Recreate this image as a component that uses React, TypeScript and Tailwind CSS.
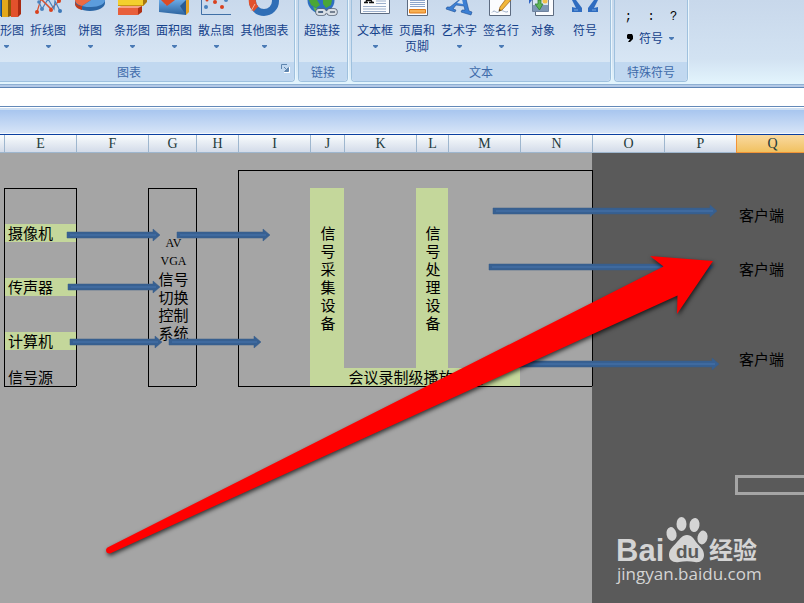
import type { ReactNode } from 'react';
import clsx from 'clsx';

interface RibbonButtonProps {
  label: string;
  icon: ReactNode;
  menu?: boolean;
  wide?: boolean;
}

interface Cell {
  text?: string;
  lines?: string[];
  rowSpan?: number;
  colSpan?: number;
  fill?: boolean;
  align?: 'left' | 'center' | 'stacked';
}

const COLUMNS = [
  { id: 'D', width: 'w-[4px]' },
  { id: 'E', width: 'w-[72px]' },
  { id: 'F', width: 'w-[72px]' },
  { id: 'G', width: 'w-[48px]' },
  { id: 'H', width: 'w-[42px]' },
  { id: 'I', width: 'w-[72px]' },
  { id: 'J', width: 'w-[34px]' },
  { id: 'K', width: 'w-[72px]' },
  { id: 'L', width: 'w-[32px]' },
  { id: 'M', width: 'w-[72px]' },
  { id: 'N', width: 'w-[72px]' },
  { id: 'O', width: 'w-[72px]' },
  { id: 'P', width: 'w-[72px]' },
  { id: 'Q', width: 'w-[72px]' },
];

const ROWS = Array.from({ length: 60 }, (_, i) => i + 1);

const CELLS: Record<string, Cell> = {
  E5: { text: '摄像机', fill: true },
  E8: { text: '传声器', fill: true },
  E11: { text: '计算机', fill: true },
  E13: { text: '信号源' },
  G3: { lines: ['AV', 'VGA', '信号', '切换', '控制', '系统'], rowSpan: 11, align: 'center' },
  J3: { text: '信号采集设备', rowSpan: 10, fill: true, align: 'stacked' },
  L3: { text: '信号处理设备', rowSpan: 10, fill: true, align: 'stacked' },
  J13: { text: '会议录制级播放系统', colSpan: 4, fill: true, align: 'center' },
  Q4: { text: '客户端' },
  Q7: { text: '客户端' },
  Q12: { text: '客户端' },
};

// Outlined ranges: first column, last column, first row, last row
const BOXES = [
  [1, 1, 3, 13],
  [3, 3, 3, 13],
  [5, 10, 2, 13],
];

const ARROWS = [
  { from: 67, to: 160, y: 235 },
  { from: 177, to: 270, y: 235 },
  { from: 68, to: 160, y: 287 },
  { from: 70, to: 162, y: 342 },
  { from: 169, to: 261, y: 342 },
  { from: 493, to: 717, y: 211 },
  { from: 489, to: 713, y: 267 },
  { from: 495, to: 719, y: 364 },
];

function isCovered(col: number, row: number) {
  return Object.entries(CELLS).some(([key, cell]) => {
    const c = COLUMNS.findIndex((column) => column.id === key[0]);
    const r = Number(key.slice(1));
    if (c === col && r === row) return false;
    return col >= c && col < c + (cell.colSpan ?? 1) && row >= r && row < r + (cell.rowSpan ?? 1);
  });
}

function outline(col: number, row: number) {
  const left = BOXES.some(([c1, c2, r1, r2]) => (col === c1 || col === c2 + 1) && row >= r1 && row <= r2);
  const top = BOXES.some(([c1, c2, r1, r2]) => (row === r1 || row === r2 + 1) && col >= c1 && col <= c2);
  return clsx(left && 'border-l border-l-black', top && 'border-t border-t-black');
}

function Caret() {
  return (
    <svg width="5" height="3" viewBox="0 0 5 3" aria-hidden="true">
      <path d="M0 0h5v1L3 3H2L0 1z" fill="#4a7ab5" />
    </svg>
  );
}

function RibbonButton({ label, icon, menu, wide }: RibbonButtonProps) {
  return (
    <button
      type="button"
      className={clsx(
        'flex shrink-0 flex-col items-center text-xs leading-4 text-[#15428b]',
        wide ? 'w-[55px]' : 'w-[42px]'
      )}
    >
      <span className="mb-0.5 block h-5">{icon}</span>
      <span className="whitespace-pre">{label}</span>
      {menu && (
        <span className="flex h-4 items-center">
          <Caret />
        </span>
      )}
    </button>
  );
}

interface RibbonGroupProps {
  title: string;
  className: string;
  launcher?: boolean;
  children: ReactNode;
}

function RibbonGroup({ title, className, launcher, children }: RibbonGroupProps) {
  return (
    <section
      aria-label={title}
      className={clsx(
        'flex h-[82px] shrink-0 flex-col rounded-b border border-t-0 border-[#9fc1de] bg-gradient-to-b from-[#c9d9ec] to-[#dceaf7] shadow-[1px_0_0_#eaf6fd]',
        className
      )}
    >
      <div className={clsx('flex h-[62px] px-0.5', launcher && 'justify-end')}>{children}</div>
      <div className="relative h-[19px] rounded-b bg-[#c1d8f0] text-center text-xs leading-[19px] text-[#3e6aaa]">
        {title}
        {launcher && (
          <button type="button" aria-label="图表选项" className="absolute top-0.5 right-1">
            <svg width="9" height="9" viewBox="0 0 9 9">
              <path d="M8 3v5H3" fill="none" stroke="#fff" strokeWidth="2" />
              <path d="M.5 5V.5H6" fill="none" stroke="#5f86b0" />
              <path d="M3 3l3 3M7.500 3.500v4h-4z" fill="#5f86b0" stroke="#5f86b0" />
            </svg>
          </button>
        )}
      </div>
    </section>
  );
}

function ColumnIcon() {
  return (
    <svg width="42" height="20" viewBox="0 0 42 20">
      <path d="M8 0h8v16H8z" fill="#2d6fb5" />
      <path d="M16 0h2v17h-2z" fill="#184a86" />
      <path d="M17 0h6v17h-6z" fill="#e3a81b" />
      <path d="M23 0h3v16l-3 1z" fill="#8a5a05" />
      <path d="M26 0h7v17h-7z" fill="#e2512c" />
      <path d="M33 0h3v14l-3 3z" fill="#a82a12" />
    </svg>
  );
}

function LineIcon() {
  return (
    <svg width="42" height="20" viewBox="0 0 42 20">
      <path d="M10 12l4-13 10 10 9-9" fill="none" stroke="#d9502f" strokeWidth="1.200" />
      <path d="M12 2l3 7 6-10 6 10 1-8 5 10" fill="none" stroke="#4a82bd" strokeWidth="1.200" />
      <path d="M14 -1l10 10" stroke="#d9502f" strokeWidth="1.200" />
      <circle cx="10" cy="12" r="2" fill="#d9411e" />
      <circle cx="24" cy="10" r="2" fill="#d9411e" />
      <circle cx="15" cy="9" r="2" fill="#4a82bd" />
      <circle cx="33" cy="11" r="2" fill="#3c78b8" />
      <circle cx="32" cy="1" r="2" fill="#d9411e" />
      <circle cx="12" cy="2" r="1.800" fill="#4a82bd" />
    </svg>
  );
}

function PieIcon() {
  return (
    <svg width="42" height="20" viewBox="0 0 42 20">
      <path d="M6 0v3c0 4 6 8 15 8s15-4 15-8V0z" fill="#2b66a5" />
      <path d="M13 6L22 0h14c0 4-6 7-14 7-3 0-6 0-9-1z" fill="#5c9ddc" />
      <path d="M6 0h16l-9 6c-4-1-7-3-7-6z" fill="#ec6a43" />
      <path d="M6 1c0 3 3 5 7 5v4C9 9 6 7 6 4z" fill="#c23c1c" />
    </svg>
  );
}

function BarIcon() {
  return (
    <svg width="42" height="20" viewBox="0 0 42 20">
      <path d="M7 0h25v6H7z" fill="#f3cf2e" />
      <path d="M32 6V0h4v2z" fill="#a9780d" />
      <path d="M7 5h25l3-2-3 3H7z" fill="#c79512" />
      <path d="M7 8h20v7H7z" fill="#e85f3c" />
      <path d="M7 8l3-2h21l-4 2z" fill="#f6a184" />
      <path d="M27 8l4-2v6l-4 3z" fill="#b03015" />
    </svg>
  );
}

function AreaIcon() {
  return (
    <svg width="42" height="20" viewBox="0 0 42 20">
      <defs>
        <linearGradient id="area" x2="0" y2="1">
          <stop stopColor="#6aa9e6" />
          <stop offset="1" stopColor="#2c639e" />
        </linearGradient>
      </defs>
      <path d="M33 0h3v12l-3 3z" fill="#e5a224" />
      <path d="M6 3V0h4l3 5 5-5h15v15L6 12z" fill="url(#area)" />
      <path d="M8 0h14l-8 6z" fill="#dd4b25" />
      <path d="M33 0l-6 6 6 9z" fill="#2a5b93" />
    </svg>
  );
}

function ScatterIcon() {
  return (
    <svg width="42" height="20" viewBox="0 0 42 20">
      <path d="M6.500 0v14.500H36" fill="none" stroke="#3f6fa6" />
      <circle cx="11" cy="7" r="2" fill="#4a82bd" />
      <circle cx="20" cy="2" r="2" fill="#d9411e" />
      <circle cx="27" cy="7" r="2" fill="#d9411e" />
      <circle cx="31" cy="0" r="2" fill="#4a82bd" />
      <circle cx="12" cy="0" r="1.500" fill="#d9411e" />
    </svg>
  );
}

function DoughnutIcon() {
  return (
    <svg width="42" height="20" viewBox="0 0 42 20">
      <circle cx="20" cy="1" r="11.500" fill="none" stroke="#2f6eb6" strokeWidth="7" />
      <path d="M8.500-2a12 12 0 0 0 3.500 11" fill="none" stroke="#e2512c" strokeWidth="7" />
      <path d="M11 4l-4 7" stroke="#f6b49c" />
    </svg>
  );
}

function GlobeIcon() {
  return (
    <svg width="42" height="20" viewBox="0 0 42 20">
      <circle cx="20" cy="0" r="13.500" fill="#2e6fc0" />
      <path d="M8 0h8l3 5-4 3-5-3zM22 0h9l-1 5-5 3-3-4z" fill="#4aa636" />
      <path d="M12 7l5 2 2 3-5-1z" fill="#61bb48" />
      <g fill="none" stroke="#596575" strokeWidth="3.400">
        <rect x="16" y="10" width="8" height="4" rx="2" />
        <rect x="27" y="10" width="8" height="4" rx="2" />
      </g>
      <g fill="none" stroke="#d9dfe6" strokeWidth="1.800">
        <rect x="16" y="10" width="8" height="4" rx="2" />
        <rect x="27" y="10" width="8" height="4" rx="2" />
        <path d="M22 12h7" />
      </g>
    </svg>
  );
}

function TextBoxIcon() {
  return (
    <svg width="42" height="20" viewBox="0 0 42 20">
      <path d="M6.500-1h29v14.500h-29z" fill="#fbfcfe" stroke="#5d6b80" />
      <path d="M22 1h10M22 3.500h10M9 6.500h23M9 9h23M9 11.500h23" stroke="#9db0cc" />
      <path d="M10 2.500h4M15 2.500h5M12 2l1-3M18 2l-1.500-3M13 .5h4" stroke="#111" strokeWidth="1.300" />
    </svg>
  );
}

function HeaderFooterIcon() {
  return (
    <svg width="42" height="20" viewBox="0 0 42 20">
      <path d="M11.500-1h20v16.500h-20z" fill="#fbfcfe" stroke="#5d6b80" />
      <path d="M14 .5h15M14 2.500h15M14 4.500h15M14 6.500h15" stroke="#8ea6cb" />
      <path d="M13.500 9.500h16v3.500h-16z" fill="#f7b054" stroke="#e07a16" />
    </svg>
  );
}

function WordArtIcon() {
  return (
    <svg width="42" height="20" viewBox="0 0 42 20">
      <path
        d="M22-1h6l3 12 3 1-1 3-10-3 1-2h3l-1-4-8-1-3 4 3 1-1 2-9-3 1-2h3z"
        fill="#3b7fd4"
        stroke="#1f4f94"
        strokeWidth=".6"
      />
      <path d="M23-1l-4 4 6 1-1-5z" fill="#d3e1f2" />
    </svg>
  );
}

function SignatureIcon() {
  return (
    <svg width="42" height="20" viewBox="0 0 42 20">
      <path d="M9.500-1h21v16.500h-21z" fill="#fbfcfe" stroke="#5d6b80" />
      <path d="M12 12.500c3-4 4 2 7-1s6 2 9 0" fill="none" stroke="#97a9c4" />
      <path d="M26-1l5 1-9 10-3 1 1-4z" fill="#f2b73a" stroke="#a26a1c" strokeWidth=".8" />
      <path d="M19 11l.6-2 1.400 1.200z" fill="#222" />
    </svg>
  );
}

function ObjectIcon() {
  return (
    <svg width="42" height="20" viewBox="0 0 42 20">
      <path d="M13.500-1h18v16.500h-18z" fill="#fbfcfe" stroke="#5d6b80" />
      <path d="M10.500-1h16v12.500h-16z" fill="#dbe6f2" stroke="#6f839f" />
      <path d="M11 5h15v6H11z" fill="#7e97b5" />
      <circle cx="23" cy="1" r="2.500" fill="#f2c04b" />
      <path d="M16 0h3v4h2l-3.500 6L13 4h3z" fill="#5fb556" stroke="#2f7d33" strokeWidth=".8" />
      <path d="M7 0h3L7 4z" fill="#2d62c4" />
    </svg>
  );
}

function OmegaIcon() {
  return (
    <svg width="42" height="20" viewBox="0 0 42 20">
      <path d="M8 12h10V8L12 0H8l4 8-4-1zM34 12H24V8l6-8h4l-4 8 4-1z" fill="#2f6cc0" />
      <path d="M10 10h4M28 10h4" stroke="#76a7e2" />
    </svg>
  );
}

function SheetCell({ col, row }: { col: number; row: number }) {
  const key = `${COLUMNS[col].id}${row}`;
  const cell = CELLS[key];
  const selected = key === 'Q19';

  return (
    <td
      rowSpan={cell?.rowSpan}
      colSpan={cell?.colSpan}
      className={clsx(
        'py-0 pr-0 leading-[18px] whitespace-nowrap',
        cell?.fill ? 'bg-[#c4d79b]' : col > 10 ? 'bg-[#5a5a5a]' : 'bg-[#a5a5a5]',
        cell?.align ? 'pl-0.5 text-center' : 'pl-[3px]',
        selected && 'outline-3 -outline-offset-2 outline-[#a5a5a5]',
        outline(col, row)
      )}
    >
      {cell?.lines?.map((line) => (
        <span
          key={line}
          className={clsx('block', /^[A-Z]/.test(line) && "font-['Liberation_Serif',serif] text-xs leading-[18px]")}
        >
          {line}
        </span>
      ))}
      {cell?.align === 'stacked' ? (
        <span className="mx-auto block w-4 break-all whitespace-normal">{cell.text}</span>
      ) : (
        cell?.text
      )}
    </td>
  );
}

function Worksheet() {
  return (
    <main className="relative min-h-0 flex-1 overflow-hidden bg-[#5a5a5a]">
      <table className="w-[808px] table-fixed border-separate border-spacing-0 text-[15px] text-black">
        <thead>
          <tr>
            {COLUMNS.map(({ id, width }) => (
              <th
                key={id}
                scope="col"
                className={clsx(
                  "h-[18px] border-b bg-gradient-to-b p-0 font-['Liberation_Serif',serif] text-sm leading-[17px] font-normal text-[#1f3c3c]",
                  width,
                  id === 'Q'
                    ? 'border-l border-[#f29436] from-[#f9d99f] to-[#f1c15f]'
                    : 'border-[#9eb6ce] from-[#f9fcfd] to-[#d3dbe9]',
                  id !== 'D' && 'border-l'
                )}
              >
                {id !== 'D' && id}
              </th>
            ))}
          </tr>
        </thead>
        <tbody>
          {ROWS.map((row) => (
            <tr key={row} className={row === 1 ? 'h-[17px]' : 'h-[18px]'}>
              {COLUMNS.map(({ id }, col) =>
                isCovered(col, row) ? null : <SheetCell key={id} col={col} row={row} />
              )}
            </tr>
          ))}
        </tbody>
      </table>

      {/* Connectors and the pointer drawn on top of the cells */}
      <svg width="804" height="468" viewBox="0 135 804 468" className="pointer-events-none absolute top-0 left-0">
        {ARROWS.map(({ from, to, y }) => (
          <g key={`${from}-${y}`}>
            <path
              d={`M${from} ${y - 3}H${to - 7}V${y - 6}L${to} ${y}L${to - 7} ${y + 6}V${y + 3}H${from}z`}
              fill="#376092"
              stroke="#385d8a"
              strokeOpacity=".5"
            />
            <path d={`M${from + 3} ${y}H${to - 4}`} stroke="#3f6a9f" strokeWidth="2" />
          </g>
        ))}
        <path
          d="M107.500 547.500L663.500 266.500L650 256L713 261L677 314L677.500 295.500L110 553.500Q106 553.500 106 550Q106 548.500 107.500 547.500z"
          fill="#f00"
          className="drop-shadow-[1px_2px_2px_rgba(0,0,0,0.7)]"
        />
      </svg>
    </main>
  );
}

function Watermark() {
  return (
    <div className="absolute right-11 bottom-[18px] text-[#d4d4d4]">
      <svg width="143" height="70" viewBox="617 515 143 70" fill="currentColor" className="overflow-visible">
        <text x="616" y="561" fontFamily="Liberation Sans, sans-serif" fontSize="31" fontWeight="700">
          Bai
        </text>
        <ellipse cx="671.500" cy="534" rx="5" ry="7" transform="rotate(-12 671.500 534)" />
        <ellipse cx="681.500" cy="524" rx="5" ry="7" />
        <ellipse cx="694.500" cy="525" rx="5" ry="7" transform="rotate(8 694.500 525)" />
        <ellipse cx="702.500" cy="537.500" rx="5" ry="7" transform="rotate(12 702.500 537.500)" />
        <path d="M687 535c5 0 7 4 9 7 4 5 8 7 8 13 0 5-4 8-9 7-5-1-11-1-16 0-6 1-10-2-10-7 0-6 4-8 8-13 3-3 5-7 10-7z" />
        <text x="676" y="558" fill="#5a5a5a" fontFamily="Liberation Sans, sans-serif" fontSize="19" fontWeight="700">
          du
        </text>
        <text x="709" y="559" fontFamily="Noto Sans CJK SC, sans-serif" fontSize="24" fontWeight="700">
          经验
        </text>
        <text x="617" y="580" fontFamily="Open Sans, sans-serif" fontSize="17">
          jingyan.baidu.com
        </text>
      </svg>
    </div>
  );
}

export default function App() {
  return (
    <div className="relative flex h-screen flex-col overflow-hidden font-['Noto_Sans_CJK_SC',sans-serif]">
      <header className="flex h-[84px] shrink-0 overflow-hidden bg-gradient-to-b from-[#c8d8eb] via-[#d2e2f2] via-70% to-[#e3f5fd]">
        <RibbonGroup title="图表" launcher className="-ml-[37px] w-[332px]">
          <RibbonButton label="柱形图" icon={<ColumnIcon />} menu />
          <RibbonButton label="折线图" icon={<LineIcon />} menu />
          <RibbonButton label="饼图" icon={<PieIcon />} menu />
          <RibbonButton label="条形图" icon={<BarIcon />} menu />
          <RibbonButton label="面积图" icon={<AreaIcon />} menu />
          <RibbonButton label="散点图" icon={<ScatterIcon />} menu />
          <RibbonButton label="其他图表" icon={<DoughnutIcon />} menu wide />
        </RibbonGroup>
        <RibbonGroup title="链接" className="ml-[3px] w-[50px]">
          <RibbonButton label="超链接" icon={<GlobeIcon />} />
        </RibbonGroup>
        <RibbonGroup title="文本" className="ml-[3px] w-[260px]">
          <RibbonButton label="文本框" icon={<TextBoxIcon />} menu />
          <RibbonButton label={'页眉和\n页脚'} icon={<HeaderFooterIcon />} />
          <RibbonButton label="艺术字" icon={<WordArtIcon />} menu />
          <RibbonButton label="签名行" icon={<SignatureIcon />} menu />
          <RibbonButton label="对象" icon={<ObjectIcon />} />
          <RibbonButton label="符号" icon={<OmegaIcon />} />
        </RibbonGroup>
        <RibbonGroup title="特殊符号" className="ml-[3px] w-[74px]">
          <div className="flex w-full flex-col pt-1.5 text-xs">
            <div className="flex h-[22px] items-center justify-around font-['Liberation_Mono',monospace] text-black">
              <button type="button">;</button>
              <button type="button">:</button>
              <button type="button">?</button>
            </div>
            <div className="flex h-5 items-center gap-1.5 pl-2.5">
              <button type="button" aria-label="，">
                <svg width="6" height="10" viewBox="0 0 6 10">
                  <path d="M1 1h4l1 2v3L3 9H1l2-3H1L0 5V2z" fill="#000" />
                </svg>
              </button>
              <button type="button" className="flex items-center gap-1.5 text-[#15428b]">
                符号
                <Caret />
              </button>
            </div>
          </div>
        </RibbonGroup>
      </header>

      <div className="h-1 shrink-0 border-y border-t-[#8fb0d3] border-b-[#5f85b5] bg-[#b3c9e6]" />
      <input
        type="text"
        aria-label="编辑栏"
        className="block h-[19px] w-full shrink-0 border-b border-[#6389b8] bg-white px-2 text-xs outline-none"
      />
      <div className="h-[27px] shrink-0 border-y border-t-white border-b-[#f4f8fd] bg-gradient-to-b from-[#a4c3ee] to-[#d6e4f7] shadow-[inset_0_2px_0_#cddff3]" />

      <div className="flex min-h-0 flex-1 flex-col border-t border-[#0a3fa0]">
        <Worksheet />
      </div>
      <Watermark />
    </div>
  );
}
